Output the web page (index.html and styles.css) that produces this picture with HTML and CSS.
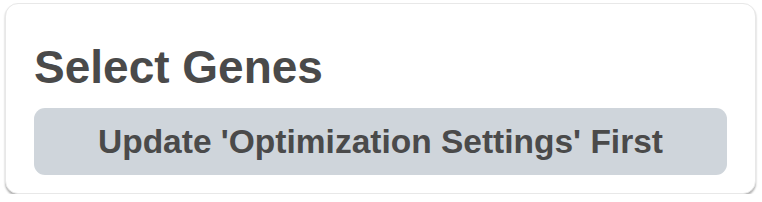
FILE: index.html
```html
<!DOCTYPE html>
<html lang="en">
<head>
    <meta charset="UTF-8">
    <meta name="viewport" content="width=device-width, initial-scale=1.0">
    <title>Select Genes</title>
    <link rel="stylesheet" href="styles.css">
</head>
<body>
    <div class="card">
        <h2 class="card-title">Select Genes</h2>
        <button class="btn-disabled" disabled>Update 'Optimization Settings' First</button>
    </div>
</body>
</html>
```

FILE: styles.css
```css
body{
    margin: 0;
    padding: 3px 6px 0 5px;
    background-color: #fff;
    font-family: "Liberation Sans", Arial, sans-serif;
}
.card{
    box-sizing: border-box;
    width: 751px;
    height: 191px;
    padding: 37px 28px 0 28px;
    border: 1px solid #e8e8e8;
    border-radius: 13px;
    background-color: #fff;
    box-shadow: 0 2px 2px rgba(0, 0, 0, 0.3);
}
.card-title{
    margin: 0;
    font-size: 46px;
    line-height: 53px;
    font-weight: bold;
    color: #4a4a4a;
}
.btn-disabled{
    display: block;
    width: 693px;
    height: 67px;
    margin-top: 14px;
    padding: 0;
    border: none;
    border-radius: 11px;
    background-color: #cfd5db;
    color: #4a4a4a;
    font-family: "Liberation Sans", Arial, sans-serif;
    font-size: 33.5px;
    font-weight: bold;
    text-align: center;
}
```
